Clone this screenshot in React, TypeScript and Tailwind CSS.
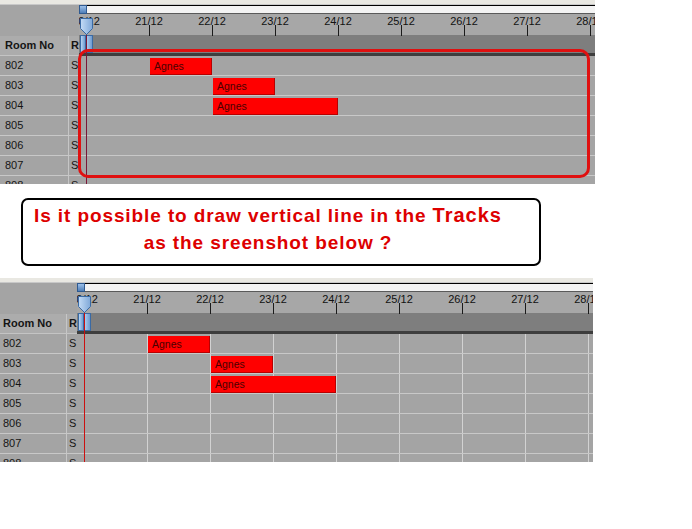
import React from 'react';

const DAY = 63;
const rooms = ['802', '803', '804', '805', '806', '807', '808'];
const dates = ['20/12', '21/12', '22/12', '23/12', '24/12', '25/12', '26/12', '27/12', '28/12'];
const bookings = [
  { row: 0, start: 1, days: 1, name: 'Agnes' },
  { row: 1, start: 2, days: 1, name: 'Agnes' },
  { row: 2, start: 2, days: 2, name: 'Agnes' },
];

// tick position inside the timeline column (timeline starts at x=79)
const tickX = (i: number) => 7 + DAY * i;

const font = { fontFamily: '"Liberation Sans", Arial, sans-serif' };

const TimelineHeader = () => (
  <div className="relative h-[51px] flex flex-col">
    <div className="h-[9px] flex">
      <div className="w-[8px] bg-gradient-to-b from-[#9cc0ea] to-[#4f7fb8] border border-[#2f5a90]" />
      <div className="flex-1 bg-[#f3f3f3] border-t border-b border-t-black border-b-[#5a5a5a]" />
    </div>
    <div className="h-[21px] bg-[#a7a7a7]" />
    <div className="h-[18px] bg-[#7e7e7e]" />
    <div className="h-[3px] bg-[#3e3e3e]" />

    {dates.map((d, i) => (
      <React.Fragment key={d}>
        <span
          className="absolute top-[10px] w-[40px] -ml-[20px] text-center text-[11px] leading-[13px] text-[#111]"
          style={{ left: tickX(i) }}
        >
          {d}
        </span>
        <div className="absolute top-[20px] h-[11px] w-px bg-[#1a1a1a]" style={{ left: tickX(i) }} />
      </React.Fragment>
    ))}

    {/* slider marker */}
    <svg className="absolute left-[1px] top-[13px]" width="13" height="17" viewBox="0 0 13 17">
      <defs>
        <linearGradient id="mk" x1="0" y1="0" x2="1" y2="0">
          <stop offset="0" stopColor="#c4dcf6" />
          <stop offset="1" stopColor="#7fa8d8" />
        </linearGradient>
      </defs>
      <path d="M0.5 0.5 H12.5 V10.5 L6.5 16.5 L0.5 10.5 Z" fill="url(#mk)" stroke="#3a6aa4" />
    </svg>
    <div className="absolute left-[1px] top-[30px] h-[18px] flex">
      <div className="w-[6px] bg-gradient-to-r from-[#b8d4f2] to-[#6d9ad0] border border-[#3a6aa4]" />
      <div className="w-[7px] bg-gradient-to-r from-[#b8d4f2] to-[#6d9ad0] border border-[#3a6aa4] border-l-0" />
    </div>
  </div>
);

const Panel = ({ variant, className = '' }: { variant: 'top' | 'bottom'; className?: string }) => (
  <div className={`relative w-[595px] h-[184px] overflow-hidden bg-[#a4a4a4] shrink-0 ${className}`} style={font}>
    <div className="h-[5px] bg-[#e9e8e2] border-b border-[#c8c8c8]" />
    <div className="flex">
      {/* left grid */}
      <div className="w-[79px] shrink-0">
        <div className="h-[31px] bg-[#a4a4a4]" />
        <div className="h-[20px] flex bg-[#acacac] border-b border-[#c4c4c4] text-[11px] font-bold text-[#151515]">
          <div className="w-[69px] pl-[5px] leading-[19px] border-r border-[#c6c6c6]">Room No</div>
          <div className="flex-1 pl-[2px] leading-[19px] overflow-hidden">R</div>
        </div>
        {rooms.map((r) => (
          <div key={r} className="h-[20px] flex border-b border-[#c8c8c8] text-[11px] text-[#151515]">
            <div className="w-[69px] pl-[5px] leading-[19px] border-r border-[#c6c6c6]">{r}</div>
            <div className="flex-1 pl-[2px] leading-[19px] overflow-hidden">S</div>
          </div>
        ))}
      </div>

      {/* timeline */}
      <div className="relative flex-1 overflow-hidden">
        {variant === 'bottom' &&
          dates.map((d, i) =>
            i === 0 ? null : (
              <div key={d} className="absolute top-[51px] bottom-0 w-px bg-[#d2d2d2]" style={{ left: tickX(i) }} />
            )
          )}
        <TimelineHeader />
        {rooms.map((r, ri) => (
          <div key={r} className="relative h-[20px] border-b border-[#c8c8c8]">
            {bookings
              .filter((b) => b.row === ri)
              .map((b, bi) => (
                <div
                  key={bi}
                  className="absolute top-[2px] bottom-0 bg-[#ff0000] border-r border-b border-[#b80000] pl-[4px] text-[10.5px] leading-[17px] text-[#4a0000]"
                  style={{ left: tickX(b.start) + 1, width: b.days * DAY - 1 }}
                >
                  {b.name}
                </div>
              ))}
          </div>
        ))}
        <div
          className={`absolute left-[7px] top-[30px] bottom-0 w-px ${variant === 'top' ? 'bg-[#7a1838]' : 'bg-[#cc1010]'}`}
        />
      </div>
    </div>

    {variant === 'top' && (
      <div className="absolute left-[78px] top-[49px] w-[512px] h-[129px] border-[3px] border-[#e01010] rounded-[10px]" />
    )}
  </div>
);

export default function App() {
  return (
    <div className="w-[692px] h-[529px] bg-white overflow-hidden flex flex-col">
      <Panel variant="top" />
      <div
        className="ml-[21px] mt-[14px] w-[520px] h-[68px] shrink-0 border-[2px] border-black rounded-[7px] flex flex-col items-center justify-center pr-[26px] pb-[6px] text-[#dd0000] font-bold text-[19px] tracking-[0.9px] leading-[27px]"
        style={font}
      >
        <div>
          Is it possible to draw vertical line in the <span className="text-[20px] tracking-[1px]">Tracks</span>
        </div>
        <div>as the sreenshot below ?</div>
      </div>
      <Panel variant="bottom" className="mt-[12px] -ml-[2px]" />
    </div>
  );
}
